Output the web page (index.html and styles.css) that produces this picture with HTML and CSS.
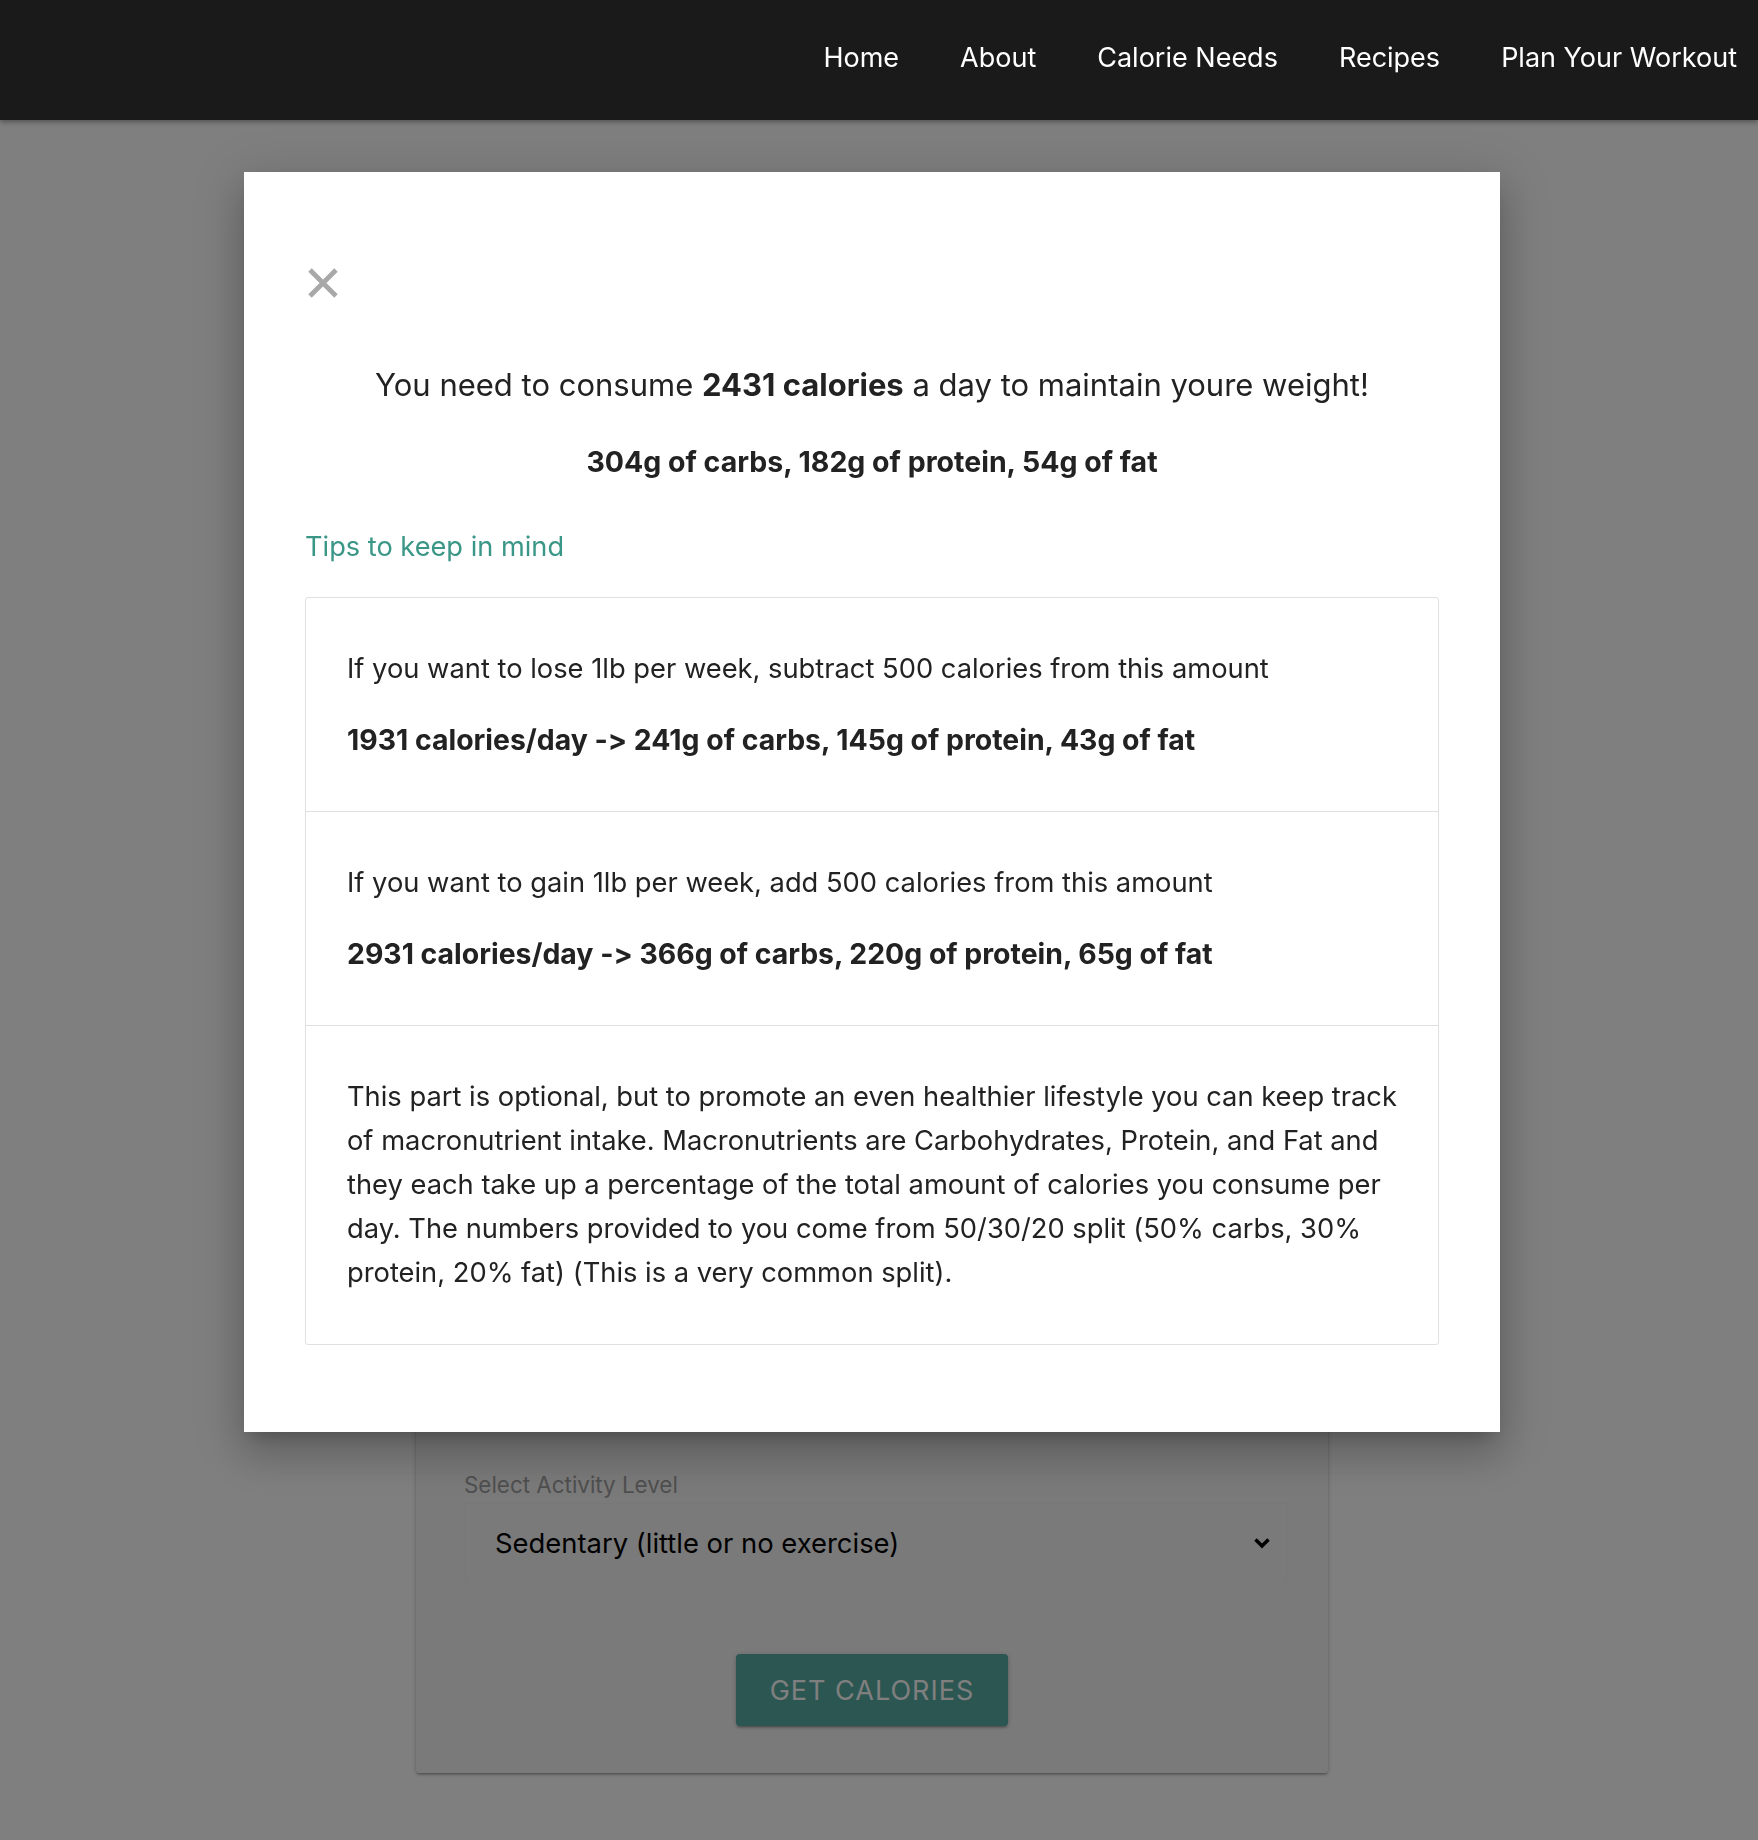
FILE: index.html
```html
<!DOCTYPE html>
<html lang="en">
<head>
<meta charset="utf-8">
<title>Calorie Needs</title>
<link rel="stylesheet" href="styles.css">
</head>
<body>
<nav class="navbar">
  <ul class="nav-links">
    <li><a href="#">Home</a></li>
    <li><a href="#">About</a></li>
    <li><a href="#">Calorie Needs</a></li>
    <li><a href="#">Recipes</a></li>
    <li><a href="#">Plan Your Workout</a></li>
  </ul>
</nav>

<main class="page">
  <section class="calc-card">
    <div class="card-fields"></div>
    <label class="field-label">Select Activity Level</label>
    <div class="select">
      <span>Sedentary (little or no exercise)</span>
      <svg class="chevron" width="18" height="14" viewBox="0 0 18 14"><path d="M2.5 3.5 L9 10 L15.5 3.5" fill="none" stroke="#000" stroke-width="3.5"/></svg>
    </div>
    <div class="actions"><button class="btn">GET CALORIES</button></div>
  </section>
</main>

<div class="overlay"></div>

<div class="modal">
  <button class="close" aria-label="Close">
    <svg width="32" height="32" viewBox="0 0 32 32"><path d="M3 3 L29 29 M29 3 L3 29" stroke="#a8a8a8" stroke-width="4.8" fill="none"/></svg>
  </button>
  <h2 class="result">You need to consume <strong>2431 calories</strong> a day to maintain youre weight!</h2>
  <p class="macros">304g of carbs, 182g of protein, 54g of fat</p>
  <h3 class="tips-title">Tips to keep in mind</h3>
  <ul class="tips">
    <li class="tip">
      <p>If you want to lose 1lb per week, subtract 500 calories from this amount</p>
      <p class="strong">1931 calories/day -&gt; 241g of carbs, 145g of protein, 43g of fat</p>
    </li>
    <li class="tip">
      <p>If you want to gain 1lb per week, add 500 calories from this amount</p>
      <p class="strong">2931 calories/day -&gt; 366g of carbs, 220g of protein, 65g of fat</p>
    </li>
    <li class="tip">
      <p>This part is optional, but to promote an even healthier lifestyle you can keep track of macronutrient intake. Macronutrients are Carbohydrates, Protein, and Fat and they each take up a percentage of the total amount of calories you consume per day. The numbers provided to you come from 50/30/20 split (50% carbs, 30% protein, 20% fat) (This is a very common split).</p>
    </li>
  </ul>
</div>
</body>
</html>
```

FILE: styles.css
```css
* { box-sizing: border-box; }

html, body {
  margin: 0;
  padding: 0;
}

body {
  font-family: Inter, "Noto Sans", "Liberation Sans", sans-serif;
  font-feature-settings: "calt" 0;
  color: #222;
  background: #ffffff;
  min-height: 1840px;
}

.navbar {
  position: relative;
  z-index: 30;
  height: 120px;
  background: #1a1a1a;
  box-shadow: 0 2px 5px rgba(0, 0, 0, 0.35);
}

.nav-links {
  list-style: none;
  margin: 0;
  padding: 0 21px 0 0;
  height: 100%;
  display: flex;
  justify-content: flex-end;
  align-items: center;
  gap: 61px;
}

.nav-links a {
  color: #fff;
  text-decoration: none;
  font-size: 27px;
  line-height: 1;
  position: relative;
  top: -3px;
}

.page {
  padding-top: 80px;
}

.calc-card {
  width: 912px;
  margin: 0 0 0 416px;
  background: #f5f5f5;
  border-radius: 3px;
  box-shadow: 0 2px 2px rgba(0,0,0,0.14), 0 3px 1px -2px rgba(0,0,0,0.12), 0 1px 5px rgba(0,0,0,0.2);
  padding: 0 48px 47px 48px;
}

.card-fields {
  height: 1273px;
}

.field-label {
  display: block;
  font-size: 22.4px;
  line-height: 24px;
  color: #9e9e9e;
}

.select {
  margin: 6px -8px 0 0;
  height: 80px;
  border: 1px solid rgba(0,0,0,0.02);
  display: flex;
  align-items: center;
  justify-content: space-between;
  padding: 0 16px 0 30px;
  font-size: 27.4px;
  color: #000;
}

.actions {
  display: flex;
  justify-content: center;
  margin-top: 71px;
}

.btn {
  width: 272px;
  height: 72px;
  border: none;
  border-radius: 4px;
  background: #56aca2;
  color: #fff;
  font-family: inherit;
  font-size: 27px;
  letter-spacing: 1px;
  box-shadow: 0 2px 2px rgba(0,0,0,0.14), 0 3px 1px -2px rgba(0,0,0,0.12), 0 1px 5px rgba(0,0,0,0.2);
}

.overlay {
  position: fixed;
  inset: 0;
  z-index: 10;
  background: rgba(0, 0, 0, 0.5);
}

.modal {
  position: absolute;
  z-index: 20;
  top: 172px;
  left: 244px;
  width: 1256px;
  height: 1260px;
  background: #fff;
  padding: 95px 61px 0 61px;
  box-shadow: 0 24px 38px 3px rgba(0,0,0,0.14), 0 9px 46px 8px rgba(0,0,0,0.12), 0 11px 15px -7px rgba(0,0,0,0.2);
}

.close {
  display: block;
  width: 32px;
  height: 32px;
  margin-left: 2px;
  padding: 0;
  border: none;
  background: none;
}

.close svg { display: block; }

.result {
  margin: 68px 0 0;
  text-align: center;
  font-size: 31px;
  line-height: 36px;
  font-weight: 400;
}

.result strong { font-weight: 700; }

.macros {
  margin: 44px 0 0;
  text-align: center;
  font-size: 28.5px;
  line-height: 30px;
  font-weight: 700;
}

.tips-title {
  margin: 54px 0 0;
  font-size: 27.2px;
  line-height: 32px;
  font-weight: 400;
  color: #3a9686;
}

.tips {
  list-style: none;
  margin: 34px 0 0;
  padding: 0;
  border: 1px solid #e0e0e0;
  border-radius: 3px;
}

.tip {
  padding: 49px 41px 49px 41px;
  border-bottom: 1px solid #e0e0e0;
  display: flex;
  flex-direction: column;
  gap: 27px;
}

.tip:last-child { border-bottom: none; }

.tip p {
  margin: 0;
  font-size: 27.3px;
  line-height: 44px;
}

.tip p.strong {
  font-weight: 700;
  font-size: 28.4px;
}
```
